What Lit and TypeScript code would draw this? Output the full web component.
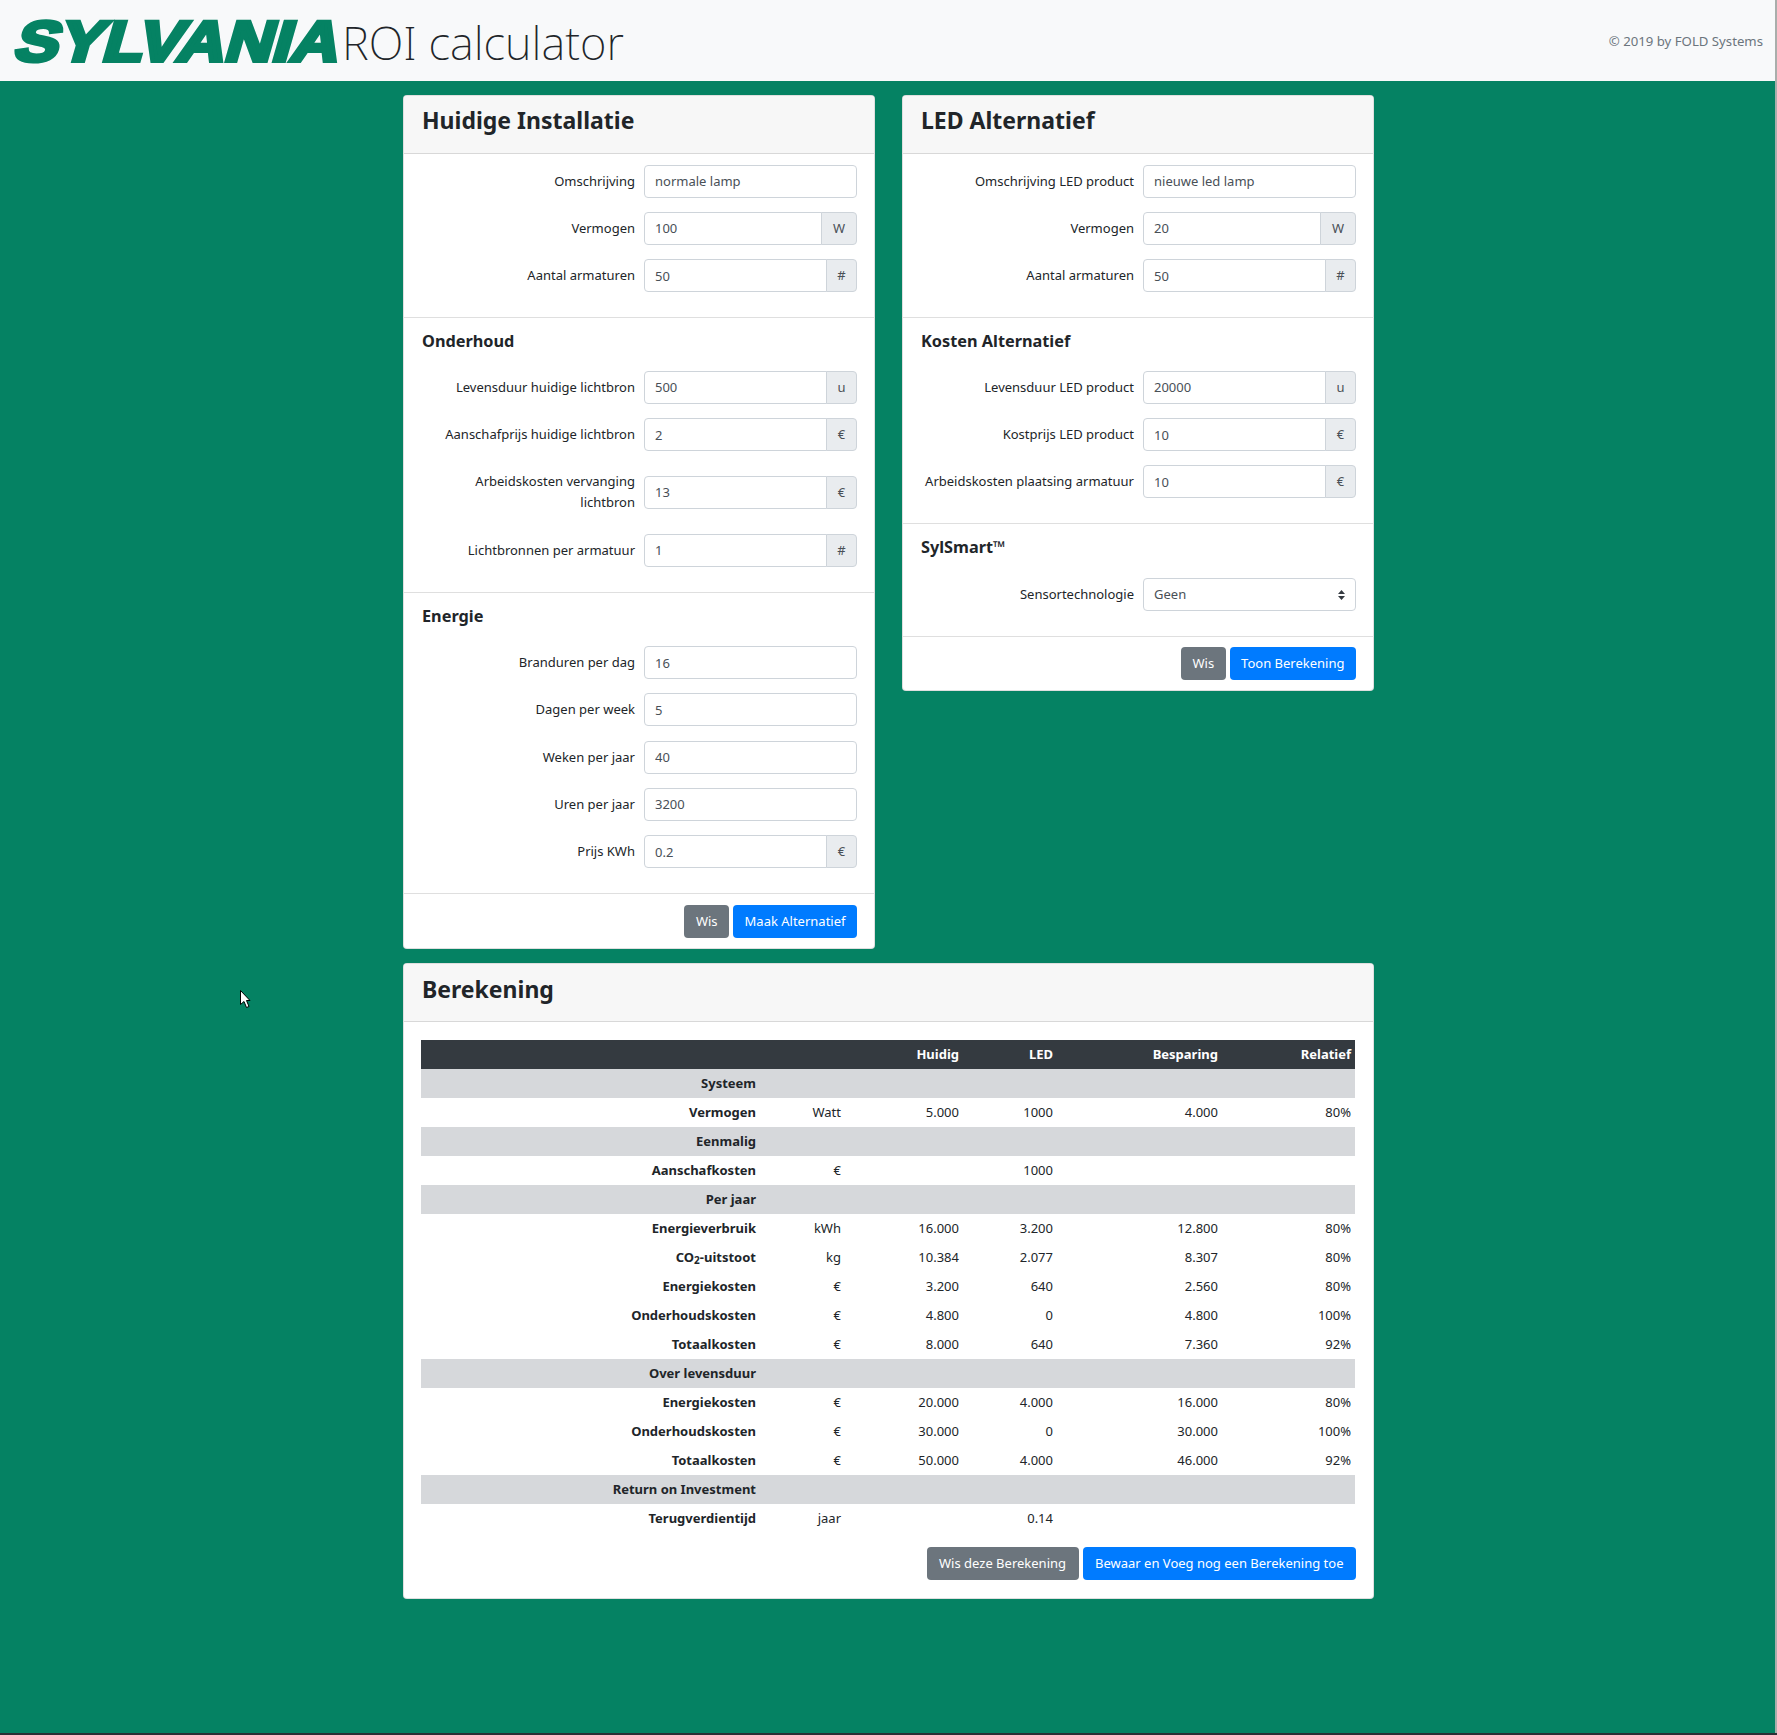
import { LitElement, html, css, nothing } from "lit";
import { customElement } from "lit/decorators.js";

type Field = { label: string; value?: string; placeholder?: string; unit?: string };
type Row = { group?: boolean; name: unknown; unit?: string; cells?: string[] };

const installatie: Field[] = [
  { label: "Omschrijving", placeholder: "normale lamp" },
  { label: "Vermogen", value: "100", unit: "W" },
  { label: "Aantal armaturen", value: "50", unit: "#" },
];
const onderhoud: Field[] = [
  { label: "Levensduur huidige lichtbron", value: "500", unit: "u" },
  { label: "Aanschafprijs huidige lichtbron", value: "2", unit: "€" },
  { label: "Arbeidskosten vervanging lichtbron", value: "13", unit: "€" },
  { label: "Lichtbronnen per armatuur", value: "1", unit: "#" },
];
const energie: Field[] = [
  { label: "Branduren per dag", value: "16" },
  { label: "Dagen per week", value: "5" },
  { label: "Weken per jaar", value: "40" },
  { label: "Uren per jaar", value: "3200" },
  { label: "Prijs KWh", value: "0.2", unit: "€" },
];
const alternatief: Field[] = [
  { label: "Omschrijving LED product", placeholder: "nieuwe led lamp" },
  { label: "Vermogen", value: "20", unit: "W" },
  { label: "Aantal armaturen", value: "50", unit: "#" },
];
const kosten: Field[] = [
  { label: "Levensduur LED product", value: "20000", unit: "u" },
  { label: "Kostprijs LED product", value: "10", unit: "€" },
  { label: "Arbeidskosten plaatsing armatuur", value: "10", unit: "€" },
];

const rows: Row[] = [
  { group: true, name: "Systeem" },
  { name: "Vermogen", unit: "Watt", cells: ["5.000", "1000", "4.000", "80%"] },
  { group: true, name: "Eenmalig" },
  { name: "Aanschafkosten", unit: "€", cells: ["", "1000", "", ""] },
  { group: true, name: "Per jaar" },
  { name: "Energieverbruik", unit: "kWh", cells: ["16.000", "3.200", "12.800", "80%"] },
  { name: html`CO<sub>2</sub>-uitstoot`, unit: "kg", cells: ["10.384", "2.077", "8.307", "80%"] },
  { name: "Energiekosten", unit: "€", cells: ["3.200", "640", "2.560", "80%"] },
  { name: "Onderhoudskosten", unit: "€", cells: ["4.800", "0", "4.800", "100%"] },
  { name: "Totaalkosten", unit: "€", cells: ["8.000", "640", "7.360", "92%"] },
  { group: true, name: "Over levensduur" },
  { name: "Energiekosten", unit: "€", cells: ["20.000", "4.000", "16.000", "80%"] },
  { name: "Onderhoudskosten", unit: "€", cells: ["30.000", "0", "30.000", "100%"] },
  { name: "Totaalkosten", unit: "€", cells: ["50.000", "4.000", "46.000", "92%"] },
  { group: true, name: "Return on Investment" },
  { name: "Terugverdientijd", unit: "jaar", cells: ["", "0.14", "", ""] },
];

@customElement("app-root")
export class AppRoot extends LitElement {
  static styles = css`
    :host {
      display: block;
      position: relative;
      min-height: 100vh;
      overflow: hidden;
      background: #058263;
      color: #212529;
      font-family: "Noto Sans", "Open Sans", sans-serif;
      font-size: 13px;
      line-height: 21px;
    }
    * {
      box-sizing: border-box;
    }

    .topbar {
      height: 81px;
      background: #f8f9fa;
      display: flex;
      align-items: center;
      padding: 0 14px;
    }
    .logo {
      width: 326px;
      height: 50px;
      flex-shrink: 0;
      overflow: visible;
    }
    .logo text {
      font-family: "Liberation Sans", sans-serif;
      font-weight: 700;
      font-size: 57px;
      fill: #058263;
      stroke: #058263;
      stroke-width: 4px;
    }
    .title {
      margin-left: 2px;
      padding-top: 4px;
      font-size: 45.5px;
      font-weight: 200;
      line-height: 77px;
      color: #212529;
    }
    .copyright {
      margin-left: auto;
      padding-top: 2px;
      color: #6c757d;
      font-size: 13.2px;
    }

    .page {
      width: 971px;
      margin: 14px auto 0;
      display: grid;
      grid-template-columns: 472px 472px;
      justify-content: space-between;
      align-items: start;
      row-gap: 14px;
    }
    .card {
      background: #fff;
      border: 1px solid rgba(0, 0, 0, 0.125);
      border-radius: 4px;
      overflow: hidden;
    }
    .wide {
      grid-column: 1 / 3;
    }
    .card-header {
      height: 58px;
      padding: 0 18px 8px;
      display: flex;
      align-items: center;
      background: #f7f7f7;
      border-bottom: 1px solid rgba(0, 0, 0, 0.125);
      font-size: 23px;
      font-weight: 700;
    }
    .section {
      padding: 10px 17px 25px 18px;
      border-bottom: 1px solid rgba(0, 0, 0, 0.125);
    }
    .section.first {
      padding-top: 10.5px;
      padding-bottom: 24.5px;
    }
    .section h4 {
      margin: 0 0 16.4px;
      font-size: 16.3px;
      line-height: 27px;
      font-weight: 700;
    }
    .fields {
      display: flex;
      flex-direction: column;
      gap: 14.25px;
    }
    .field {
      display: grid;
      grid-template-columns: 1fr 213px;
      column-gap: 9px;
      align-items: center;
    }
    .field label {
      padding: 6px 0;
      text-align: right;
    }
    .control {
      position: relative;
      display: flex;
      height: 33px;
    }
    input,
    select {
      flex: 1;
      width: 100%;
      min-width: 0;
      height: 33px;
      padding: 0 10px;
      background: #fff;
      border: 1px solid #ced4da;
      border-radius: 4px;
      color: #495057;
      font: inherit;
      outline: none;
      appearance: none;
    }
    input::placeholder {
      color: #495057;
      opacity: 1;
    }
    .has-unit input {
      border-radius: 4px 0 0 4px;
    }
    .unit {
      min-width: 31px;
      padding: 0 1px;
      margin-left: -1px;
      display: flex;
      align-items: center;
      justify-content: center;
      background: #e9ecef;
      border: 1px solid #ced4da;
      border-radius: 0 4px 4px 0;
      color: #495057;
    }
    .unit.w {
      min-width: 36px;
    }
    .arrows {
      position: absolute;
      right: 11px;
      top: 12px;
      width: 7px;
      height: 10px;
      pointer-events: none;
    }

    .actions {
      display: flex;
      justify-content: flex-end;
      gap: 4px;
      padding: 10.5px 17px 10px 18px;
    }
    .btn {
      height: 33px;
      padding: 0 11.5px;
      border: 0;
      border-radius: 4px;
      color: #fff;
      font: inherit;
    }
    .gray {
      background: #6c757d;
    }
    .blue {
      background: #007bff;
    }

    .wide .card-header {
      padding-bottom: 5px;
    }
    .wide .btn {
      padding: 0 12.5px;
    }
    .calc {
      padding: 18px 17px 0;
    }
    .calc + .actions {
      padding-top: 14px;
      padding-bottom: 18px;
    }
    table {
      width: 934px;
      table-layout: fixed;
      border-collapse: collapse;
    }
    .c1 { width: 339px; }
    .c2 { width: 85px; }
    .c3 { width: 118px; }
    .c4 { width: 94px; }
    .c5 { width: 165px; }
    .c6 { width: 133px; }
    th,
    td {
      height: 29px;
      padding: 4px;
      line-height: 21px;
      text-align: right;
      font-weight: 400;
      white-space: nowrap;
    }
    thead th {
      background: #343a40;
      color: #fff;
      font-weight: 700;
    }
    tbody th {
      font-weight: 700;
    }
    .group th,
    .group td {
      background: #d6d8db;
    }
    sub {
      font-size: 10px;
      line-height: 0;
      vertical-align: -2px;
    }

    .cursor {
      position: absolute;
      left: 240px;
      top: 990px;
      width: 11px;
      height: 18px;
    }
    .edge-right {
      position: absolute;
      top: 0;
      right: 0;
      bottom: 0;
      width: 2px;
      background: #a9aeab;
    }
    .edge-bottom {
      position: absolute;
      left: 0;
      right: 0;
      bottom: 0;
      height: 2px;
      background: #2c3036;
    }
  `;

  private renderFields(fields: Field[]) {
    return html`<div class="fields">
      ${fields.map(
        (f) => html`<div class="field">
          <label>${f.label}</label>
          <div class="control ${f.unit ? "has-unit" : ""}">
            <input value=${f.value ?? nothing} placeholder=${f.placeholder ?? nothing} />
            ${f.unit
              ? html`<span class="unit ${f.unit === "W" ? "w" : ""}">${f.unit}</span>`
              : ""}
          </div>
        </div>`
      )}
    </div>`;
  }

  private renderTable() {
    return html`<table>
      <colgroup>
        <col class="c1" /><col class="c2" /><col class="c3" /><col class="c4" /><col class="c5" /><col class="c6" />
      </colgroup>
      <thead>
        <tr>
          <th></th><th></th><th>Huidig</th><th>LED</th><th>Besparing</th><th>Relatief</th>
        </tr>
      </thead>
      <tbody>
        ${rows.map((r) =>
          r.group
            ? html`<tr class="group"><th>${r.name}</th><td colspan="5"></td></tr>`
            : html`<tr>
                <th>${r.name}</th>
                <td>${r.unit}</td>
                ${r.cells!.map((c) => html`<td>${c}</td>`)}
              </tr>`
        )}
      </tbody>
    </table>`;
  }

  render() {
    return html`
      <header class="topbar">
        <svg class="logo" viewBox="0 0 326 50" role="img" aria-label="Sylvania">
          <text x="0" y="45" textLength="324" lengthAdjust="spacingAndGlyphs" transform="translate(11 0) skewX(-16)">SYLVANIA</text>
        </svg>
        <div class="title">ROI calculator</div>
        <div class="copyright">© 2019 by FOLD Systems</div>
      </header>

      <main class="page">
        <section class="card">
          <div class="card-header">Huidige Installatie</div>
          <div class="section first">${this.renderFields(installatie)}</div>
          <div class="section">
            <h4>Onderhoud</h4>
            ${this.renderFields(onderhoud)}
          </div>
          <div class="section">
            <h4>Energie</h4>
            ${this.renderFields(energie)}
          </div>
          <div class="actions">
            <button class="btn gray">Wis</button>
            <button class="btn blue">Maak Alternatief</button>
          </div>
        </section>

        <section class="card">
          <div class="card-header">LED Alternatief</div>
          <div class="section first">${this.renderFields(alternatief)}</div>
          <div class="section">
            <h4>Kosten Alternatief</h4>
            ${this.renderFields(kosten)}
          </div>
          <div class="section">
            <h4>SylSmart™</h4>
            <div class="field">
              <label>Sensortechnologie</label>
              <div class="control">
                <select><option>Geen</option></select>
                <svg class="arrows" viewBox="0 0 7 10">
                  <path d="M3.5 0 7 4H0zM3.5 10 0 6h7z" fill="#343a40" />
                </svg>
              </div>
            </div>
          </div>
          <div class="actions">
            <button class="btn gray">Wis</button>
            <button class="btn blue">Toon Berekening</button>
          </div>
        </section>

        <section class="card wide">
          <div class="card-header">Berekening</div>
          <div class="calc">${this.renderTable()}</div>
          <div class="actions">
            <button class="btn gray">Wis deze Berekening</button>
            <button class="btn blue">Bewaar en Voeg nog een Berekening toe</button>
          </div>
        </section>
      </main>

      <svg class="cursor" viewBox="0 0 11 18">
        <path d="M.5.5v14l3.5-3 2.5 6 2.5-1-2.5-6H10z" fill="#fff" stroke="#000" />
      </svg>
      <div class="edge-right"></div>
      <div class="edge-bottom"></div>
    `;
  }
}
